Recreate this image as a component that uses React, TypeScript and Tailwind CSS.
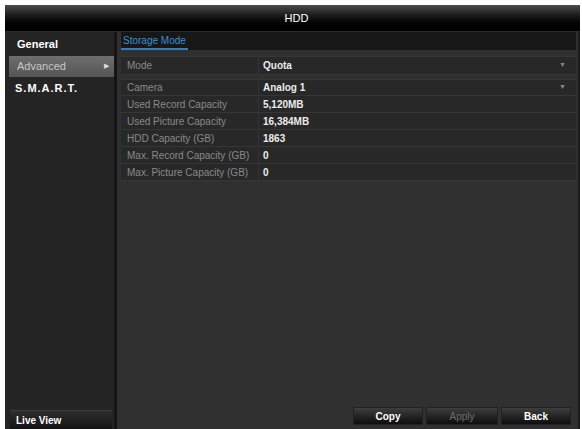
const rows = [
  { label: "Used Record Capacity", value: "5,120MB" },
  { label: "Used Picture Capacity", value: "16,384MB" },
  { label: "HDD Capacity (GB)", value: "1863" },
  { label: "Max. Record Capacity (GB)", value: "0" },
  { label: "Max. Picture Capacity (GB)", value: "0" },
];

function SelectRow({ label, value, className }: { label: string; value: string; className: string }) {
  return (
    <div className={`flex bg-[#282828] border-y border-[#363636] ${className}`}>
      <div className="w-[138px] pl-[6px] flex items-center text-[#8a8a8a] border-r border-[#333]">
        {label}
      </div>
      <div className="flex-1 pl-[4px] pr-[10px] flex items-center justify-between text-[#ececec] font-bold">
        <span>{value}</span>
        <span className="text-[7px] text-[#888]">▼</span>
      </div>
    </div>
  );
}

export default function App() {
  return (
    <div
      className="w-[582px] h-[429px] bg-white pl-[5px] pt-[5px] pr-[2px] overflow-hidden text-[10px]"
      style={{ fontFamily: '"Liberation Sans", Arial, sans-serif' }}
    >
      <div className="h-full flex flex-col bg-[#303030]">
        {/* Title bar */}
        <div className="h-[27px] shrink-0 bg-linear-to-b from-[#4c4c4c] via-[#111] via-50% to-black border-b border-[#2a2a2a] flex justify-center pt-[7px] pl-[8px]">
          <span className="text-white text-[11px] leading-[12px]">HDD</span>
        </div>

        <div className="flex flex-1 min-h-0">
          {/* Sidebar */}
          <div className="w-[112px] shrink-0 bg-[#242424] border-r-[3px] border-[#151515] flex flex-col">
            <div className="flex flex-col gap-[1px] pt-[2px] pl-[4px]">
              <div className="h-[21px] flex items-center pl-[8px] text-white font-bold text-[11px]">General</div>
              <div className="h-[21px] flex items-center justify-between pl-[8px] pr-[5px] bg-linear-to-b from-[#6e6e6e] to-[#555] text-[#c8c8c8] text-[11px]">
                <span>Advanced</span>
                <span className="text-[7px] text-[#ddd]">▶</span>
              </div>
              <div className="h-[21px] flex items-center pl-[6px] text-white font-bold text-[11px] tracking-[1px]">S.M.A.R.T.</div>
            </div>
            <div className="flex-1" />
            <div className="h-[19px] ml-[5px] mr-[2px] border-t border-[#3c3c3c] bg-linear-to-b from-[#2e2e2e] to-[#141414] flex items-center pl-[6px] text-white font-bold text-[10px]">
              Live View
            </div>
          </div>

          {/* Content */}
          <div className="flex-1 flex flex-col pl-[4px] pr-[2px] pb-[4px] border-r-2 border-[#1c1c1c]">
            <div className="h-[18px] bg-[#171717] flex items-end">
              <div className="px-[2px] h-full flex items-center text-[#3d8fd2] border-b-2 border-[#2f7fc0]">
                Storage Mode
              </div>
            </div>

            <SelectRow label="Mode" value="Quota" className="mt-[6px] h-[19px]" />
            <SelectRow label="Camera" value="Analog 1" className="mt-[4px] h-[17px]" />

            {rows.map((r) => (
              <div key={r.label} className="flex h-[17px] bg-[#282828] border-b border-[#363636]">
                <div className="w-[138px] pl-[6px] flex items-center text-[#8a8a8a] border-r border-[#333] whitespace-nowrap">
                  {r.label}
                </div>
                <div className="flex-1 pl-[4px] flex items-center text-[#ececec] font-bold">{r.value}</div>
              </div>
            ))}

            <div className="flex-1" />

            <div className="flex justify-end gap-[3px] pr-[5px]">
              <button className="w-[70px] h-[18px] bg-linear-to-b from-[#3e3e3e] to-[#0e0e0e] border border-[#222] text-white font-bold text-[10px]">
                Copy
              </button>
              <button className="w-[72px] h-[18px] bg-linear-to-b from-[#3e3e3e] to-[#0e0e0e] border border-[#222] text-[#6e6e6e] text-[10px]">
                Apply
              </button>
              <button className="w-[70px] h-[18px] bg-linear-to-b from-[#3e3e3e] to-[#0e0e0e] border border-[#222] text-white font-bold text-[10px]">
                Back
              </button>
            </div>
          </div>
        </div>
      </div>
    </div>
  );
}
